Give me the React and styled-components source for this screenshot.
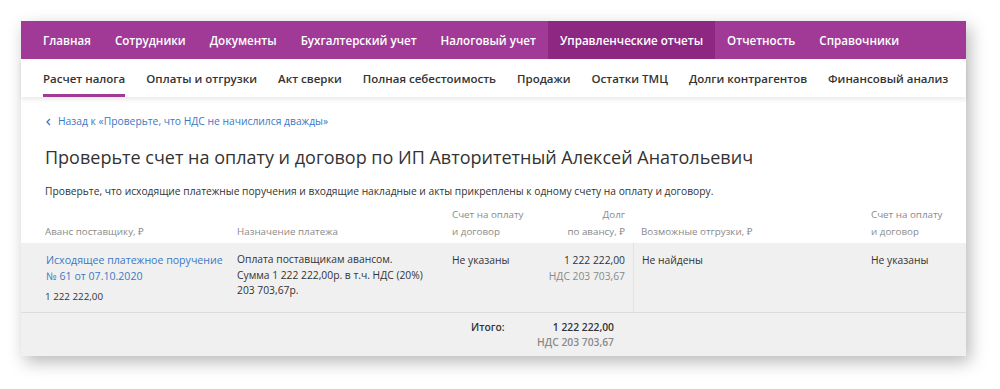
import React from "react";
import styled, { createGlobalStyle } from "styled-components";

const GlobalStyle = createGlobalStyle`
  body {
    margin: 0;
    background: #fff;
    font-family: "Open Sans", "Noto Sans", sans-serif;
    color: #333;
  }
`;

const Page = styled.div`
  padding: 21px 34px 34px 21px;
`;

const Card = styled.div`
  width: 945px;
  background: #fff;
  box-shadow: 4px 6px 16px rgba(0, 0, 0, 0.28);
`;

const TopNav = styled.nav`
  display: flex;
  height: 38px;
  padding-left: 10px;
  background: #a03a96;
`;

const TopItem = styled.a`
  display: flex;
  align-items: center;
  padding: 0 12px;
  font-size: 11.6px;
  font-weight: 600;
  color: #fff;
  white-space: nowrap;
  background: ${(p) => (p.$active ? "#8d2782" : "transparent")};
`;

const SubNav = styled.nav`
  display: flex;
  gap: 21px;
  height: 38px;
  padding-left: 22px;
  box-shadow: 0 3px 4px rgba(0, 0, 0, 0.08);
  position: relative;
`;

const SubItem = styled.a`
  display: flex;
  align-items: center;
  font-size: 11.5px;
  font-weight: 600;
  color: #333;
  white-space: nowrap;
  border-bottom: 3px solid ${(p) => (p.$active ? "#a03a96" : "transparent")};
  border-top: 3px solid transparent;
`;

const Content = styled.div`
  padding: 17px 0 0;
`;

const Intro = styled.div`
  padding: 0 24px;
`;

const BackLink = styled.a`
  display: flex;
  align-items: center;
  gap: 7px;
  font-size: 10.3px;
  line-height: 15px;
  color: #3b79c4;
  padding-left: 1px;
`;

const Title = styled.h1`
  margin: 15px 0 0;
  font-size: 18px;
  line-height: 26px;
  font-weight: 400;
  color: #333;
`;

const Lead = styled.p`
  margin: 14px 0 0;
  font-size: 10.25px;
  line-height: 15px;
`;

const Row = styled.div`
  display: grid;
  grid-template-columns: 192px 215px 93px 96px 230px 95px;
  padding: 0 8px 0 16px;
  margin-top: ${(p) => p.$mt || 0}px;
  background: ${(p) => p.$bg || "#fff"};
  border-bottom: ${(p) => (p.$line ? "1px solid #dcdcdc" : "none")};
`;

const HeadCell = styled.div`
  display: flex;
  flex-direction: column;
  justify-content: flex-end;
  padding: 1px 8px 3px;
  font-size: 9.8px;
  line-height: 17px;
  color: #8a8a8a;
  white-space: nowrap;
  align-items: ${(p) => (p.$right ? "flex-end" : "flex-start")};
`;

const Cell = styled.div`
  padding: 9px 8px 7px;
  font-size: 10.3px;
  line-height: 16px;
  color: #333;
  white-space: nowrap;
  text-align: ${(p) => (p.$right ? "right" : "left")};
  border-left: ${(p) => (p.$divider ? "1px solid #e2e2e2" : "none")};
`;

const Purpose = styled(Cell)`
  line-height: 15.5px;
`;

const DocLink = styled.a`
  display: block;
  color: #3b79c4;
  padding-left: 1px;
  font-size: 10.6px;
`;

const Amount = styled.div`
  margin-top: 5px;
  font-size: 9.8px;
`;

const Vat = styled.div`
  color: #8a8a8a;
  font-weight: ${(p) => (p.$bold ? 600 : 400)};
`;

const FootCell = styled.div`
  display: flex;
  flex-direction: column;
  align-items: ${(p) => (p.$right ? "flex-end" : "flex-start")};
  padding: 7px ${(p) => p.$pr || 8}px 6px ${(p) => p.$pl || 8}px;
  font-size: 10.3px;
  line-height: 15px;
  font-weight: 600;
  white-space: nowrap;
`;

const Chevron = () => (
  <svg width="5" height="8" viewBox="0 0 5 8">
    <path d="M4 1 L1 4 L4 7" fill="none" stroke="#3b79c4" strokeWidth="1.3" />
  </svg>
);

const topItems = [
  "Главная",
  "Сотрудники",
  "Документы",
  "Бухгалтерский учет",
  "Налоговый учет",
  "Управленческие отчеты",
  "Отчетность",
  "Справочники",
];

const subItems = [
  "Расчет налога",
  "Оплаты и отгрузки",
  "Акт сверки",
  "Полная себестоимость",
  "Продажи",
  "Остатки ТМЦ",
  "Долги контрагентов",
  "Финансовый анализ",
];

const App = () => {
  return (
    <Page>
      <GlobalStyle />
      <Card>
        <TopNav>
          {topItems.map((t) => (
            <TopItem key={t} $active={t === "Управленческие отчеты"}>
              {t}
            </TopItem>
          ))}
        </TopNav>
        <SubNav>
          {subItems.map((t, i) => (
            <SubItem key={t} $active={i === 0}>
              {t}
            </SubItem>
          ))}
        </SubNav>
        <Content>
          <Intro>
            <BackLink>
              <Chevron />
              Назад к «Проверьте, что НДС не начислился дважды»
            </BackLink>
            <Title>
              Проверьте счет на оплату и договор по ИП Авторитетный Алексей
              Анатольевич
            </Title>
            <Lead>
              Проверьте, что исходящие платежные поручения и входящие накладные
              и акты прикреплены к одному счету на оплату и договору.
            </Lead>
          </Intro>
          <Row $mt={6}>
            <HeadCell>Аванс поставщику, ₽</HeadCell>
            <HeadCell>Назначение платежа</HeadCell>
            <HeadCell>
              <span>Счет на оплату</span>
              <span>и договор</span>
            </HeadCell>
            <HeadCell $right>
              <span>Долг</span>
              <span>по авансу, ₽</span>
            </HeadCell>
            <HeadCell>Возможные отгрузки, ₽</HeadCell>
            <HeadCell>
              <span>Счет на оплату</span>
              <span>и договор</span>
            </HeadCell>
          </Row>
          <Row $bg="#f0f0f0" $line>
            <Cell>
              <DocLink>
                Исходящее платежное поручение
                <br />№ 61 от 07.10.2020
              </DocLink>
              <Amount>1 222 222,00</Amount>
            </Cell>
            <Purpose>
              Оплата поставщикам авансом.
              <br />
              Сумма 1 222 222,00р. в т.ч. НДС (20%)
              <br />
              203 703,67р.
            </Purpose>
            <Cell>Не указаны</Cell>
            <Cell $right>
              1 222 222,00
              <Vat>НДС 203 703,67</Vat>
            </Cell>
            <Cell $divider>Не найдены</Cell>
            <Cell>Не указаны</Cell>
          </Row>
          <Row $bg="#f0f0f0">
            <div />
            <div />
            <FootCell $pl={27}>Итого:</FootCell>
            <FootCell $right $pr={19}>
              <span>1 222 222,00</span>
              <Vat $bold>НДС 203 703,67</Vat>
            </FootCell>
            <div />
            <div />
          </Row>
        </Content>
      </Card>
    </Page>
  );
};

export default App;
